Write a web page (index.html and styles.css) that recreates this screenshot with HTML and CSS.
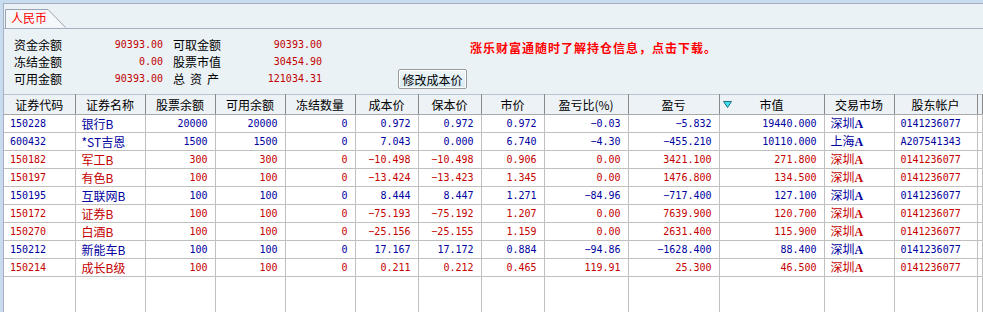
FILE: index.html
```html
<!DOCTYPE html>
<html lang="zh-CN">
<head>
    <meta charset="UTF-8">
    <title>人民币持仓</title>
    <link rel="stylesheet" href="styles.css">
</head>
<body>
<div class="frame">
    <div class="tabbar">
        <div class="tab">
            <svg class="tab-shape" width="62" height="19" viewBox="0 0 62 19">
                <path d="M0.5 19 V0.5 H43 L60.5 18.5" fill="#f5f8fa" stroke="#9aa3b3" stroke-width="1"/>
            </svg>
            <span class="tab-text">人民币</span>
        </div>
    </div>

    <div class="info">
        <div class="sums">
            <div class="cell"><span>资金余额</span><span class="val">90393.00</span></div>
            <div class="cell"><span>可取金额</span><span class="val">90393.00</span></div>
            <div class="cell"><span>冻结金额</span><span class="val">0.00</span></div>
            <div class="cell"><span>股票市值</span><span class="val">30454.90</span></div>
            <div class="cell"><span>可用金额</span><span class="val">90393.00</span></div>
            <div class="cell"><span class="spaced">总资产</span><span class="val">121034.31</span></div>
        </div>
        <div class="side">
            <div class="notice">涨乐财富通随时了解持仓信息，点击下载。</div>
            <button class="btn">修改成本价</button>
        </div>
    </div>

    <table class="grid">
        <colgroup>
            <col style="width:71px"><col style="width:70px"><col style="width:70px"><col style="width:70px">
            <col style="width:70px"><col style="width:63px"><col style="width:63px"><col style="width:63px">
            <col style="width:84px"><col style="width:91px"><col style="width:105px"><col style="width:70px">
            <col style="width:83px"><col>
        </colgroup>
        <thead>
            <tr>
                <th>证券代码</th><th>证券名称</th><th>股票余额</th><th>可用余额</th><th>冻结数量</th>
                <th>成本价</th><th>保本价</th><th>市价</th><th>盈亏比(%)</th><th>盈亏</th>
                <th class="sorted"><svg class="sort" width="9" height="7" viewBox="0 0 9 7"><path d="M0.5 0.5 H8.5 L4.5 6.5 Z" fill="#3fe0f0" stroke="#207080" stroke-width="1"/></svg>市值</th>
                <th>交易市场</th><th>股东帐户</th><th></th>
            </tr>
        </thead>
        <tbody>
            <tr class="b"><td class="l num">150228</td><td class="l">银行B</td><td class="num">20000</td><td class="num">20000</td><td class="num">0</td><td class="num">0.972</td><td class="num">0.972</td><td class="num">0.972</td><td class="num">−0.03</td><td class="num">−5.832</td><td class="num">19440.000</td><td class="l">深圳<b>A</b></td><td class="l num">0141236077</td><td></td></tr>
            <tr class="b"><td class="l num">600432</td><td class="l">*ST吉恩</td><td class="num">1500</td><td class="num">1500</td><td class="num">0</td><td class="num">7.043</td><td class="num">0.000</td><td class="num">6.740</td><td class="num">−4.30</td><td class="num">−455.210</td><td class="num">10110.000</td><td class="l">上海<b>A</b></td><td class="l num">A207541343</td><td></td></tr>
            <tr class="r"><td class="l num">150182</td><td class="l">军工B</td><td class="num">300</td><td class="num">300</td><td class="num">0</td><td class="num">−10.498</td><td class="num">−10.498</td><td class="num">0.906</td><td class="num">0.00</td><td class="num">3421.100</td><td class="num">271.800</td><td class="l">深圳<b>A</b></td><td class="l num">0141236077</td><td></td></tr>
            <tr class="r"><td class="l num">150197</td><td class="l">有色B</td><td class="num">100</td><td class="num">100</td><td class="num">0</td><td class="num">−13.424</td><td class="num">−13.423</td><td class="num">1.345</td><td class="num">0.00</td><td class="num">1476.800</td><td class="num">134.500</td><td class="l">深圳<b>A</b></td><td class="l num">0141236077</td><td></td></tr>
            <tr class="b"><td class="l num">150195</td><td class="l">互联网B</td><td class="num">100</td><td class="num">100</td><td class="num">0</td><td class="num">8.444</td><td class="num">8.447</td><td class="num">1.271</td><td class="num">−84.96</td><td class="num">−717.400</td><td class="num">127.100</td><td class="l">深圳<b>A</b></td><td class="l num">0141236077</td><td></td></tr>
            <tr class="r"><td class="l num">150172</td><td class="l">证券B</td><td class="num">100</td><td class="num">100</td><td class="num">0</td><td class="num">−75.193</td><td class="num">−75.192</td><td class="num">1.207</td><td class="num">0.00</td><td class="num">7639.900</td><td class="num">120.700</td><td class="l">深圳<b>A</b></td><td class="l num">0141236077</td><td></td></tr>
            <tr class="r"><td class="l num">150270</td><td class="l">白酒B</td><td class="num">100</td><td class="num">100</td><td class="num">0</td><td class="num">−25.156</td><td class="num">−25.155</td><td class="num">1.159</td><td class="num">0.00</td><td class="num">2631.400</td><td class="num">115.900</td><td class="l">深圳<b>A</b></td><td class="l num">0141236077</td><td></td></tr>
            <tr class="b"><td class="l num">150212</td><td class="l">新能车B</td><td class="num">100</td><td class="num">100</td><td class="num">0</td><td class="num">17.167</td><td class="num">17.172</td><td class="num">0.884</td><td class="num">−94.86</td><td class="num">−1628.400</td><td class="num">88.400</td><td class="l">深圳<b>A</b></td><td class="l num">0141236077</td><td></td></tr>
            <tr class="r"><td class="l num">150214</td><td class="l">成长B级</td><td class="num">100</td><td class="num">100</td><td class="num">0</td><td class="num">0.211</td><td class="num">0.212</td><td class="num">0.465</td><td class="num">119.91</td><td class="num">25.300</td><td class="num">46.500</td><td class="l">深圳<b>A</b></td><td class="l num">0141236077</td><td></td></tr>
            <tr class="filler"><td></td><td></td><td></td><td></td><td></td><td></td><td></td><td></td><td></td><td></td><td></td><td></td><td></td><td></td></tr>
        </tbody>
    </table>
</div>
</body>
</html>
```

FILE: styles.css
```css
html, body { margin: 0; height: 100%; overflow: hidden; }
body { background: #c9dbee; font-family: "Noto Sans CJK SC", "DejaVu Sans", sans-serif; font-size: 12px; color: #000; }

.frame { margin: 3px 0 0 3px; border-top: 1px solid #a6b0c2; border-left: 1px solid #a6b0c2; background: #ebf2f6; height: 308px; overflow: hidden; }

.tabbar { height: 24px; border-bottom: 1px solid #a6aec0; display: flex; align-items: flex-end; padding-left: 1px; }
.tab { position: relative; width: 62px; height: 19px; }
.tab-shape { position: absolute; left: 0; top: 0; }
.tab-text { position: relative; display: block; padding-left: 6px; line-height: 18px; color: #ff0000; }

.info { height: 65px; display: flex; }
.sums { display: grid; grid-template-columns: 149px 149px; column-gap: 10px; grid-auto-rows: 17px; padding: 7px 0 0 10px; }
.cell { display: flex; justify-content: space-between; line-height: 17px; }
.val { color: #c00000; font-family: "DejaVu Sans Mono", monospace; font-size: 10px; }
.spaced { letter-spacing: 5px; }

.side { margin-left: 76px; display: flex; flex-direction: column; align-items: flex-start; }
.notice { margin: 11px 0 0 72px; color: #ff0000; font-weight: bold; letter-spacing: 1px; line-height: 16px; }
.btn { margin-top: 13px; width: 69px; height: 20px; padding: 0; font-family: inherit; font-size: 12px; color: #000;
       background: linear-gradient(#eef6fa, #d6e9f2); border: 1px solid #9a9a9a; border-radius: 2px; box-shadow: inset 0 0 0 1px #ffffff; }

.grid { border-collapse: collapse; table-layout: fixed; width: 979px; background: #fff; }
.grid th { height: 19px; padding: 0; font-weight: normal; background: #edf2f6; border-top: 1px solid #b8c4d0; border-bottom: 1px solid #a8a8a8; border-right: 1px solid #8a8a8a; line-height: 19px; white-space: nowrap; }
.grid th.sorted { position: relative; }
.sort { position: absolute; left: 3px; top: 6px; }
.grid td { height: 15px; padding: 0 7px 0 0; border-right: 1px solid #c0c0c0; border-bottom: 1px solid #c0c0c0; text-align: right; line-height: 15px; white-space: nowrap; overflow: hidden; }
.grid td.l { text-align: left; padding: 0 0 0 6px; }
.num { font-family: "DejaVu Sans Mono", monospace; font-size: 10px; }
.grid td b { font-family: "Liberation Serif", serif; font-weight: bold; font-size: 12px; }
.b td { color: #0000a0; }
.r td { color: #c40000; }
.filler td { height: 60px; border-bottom: none; }
```
